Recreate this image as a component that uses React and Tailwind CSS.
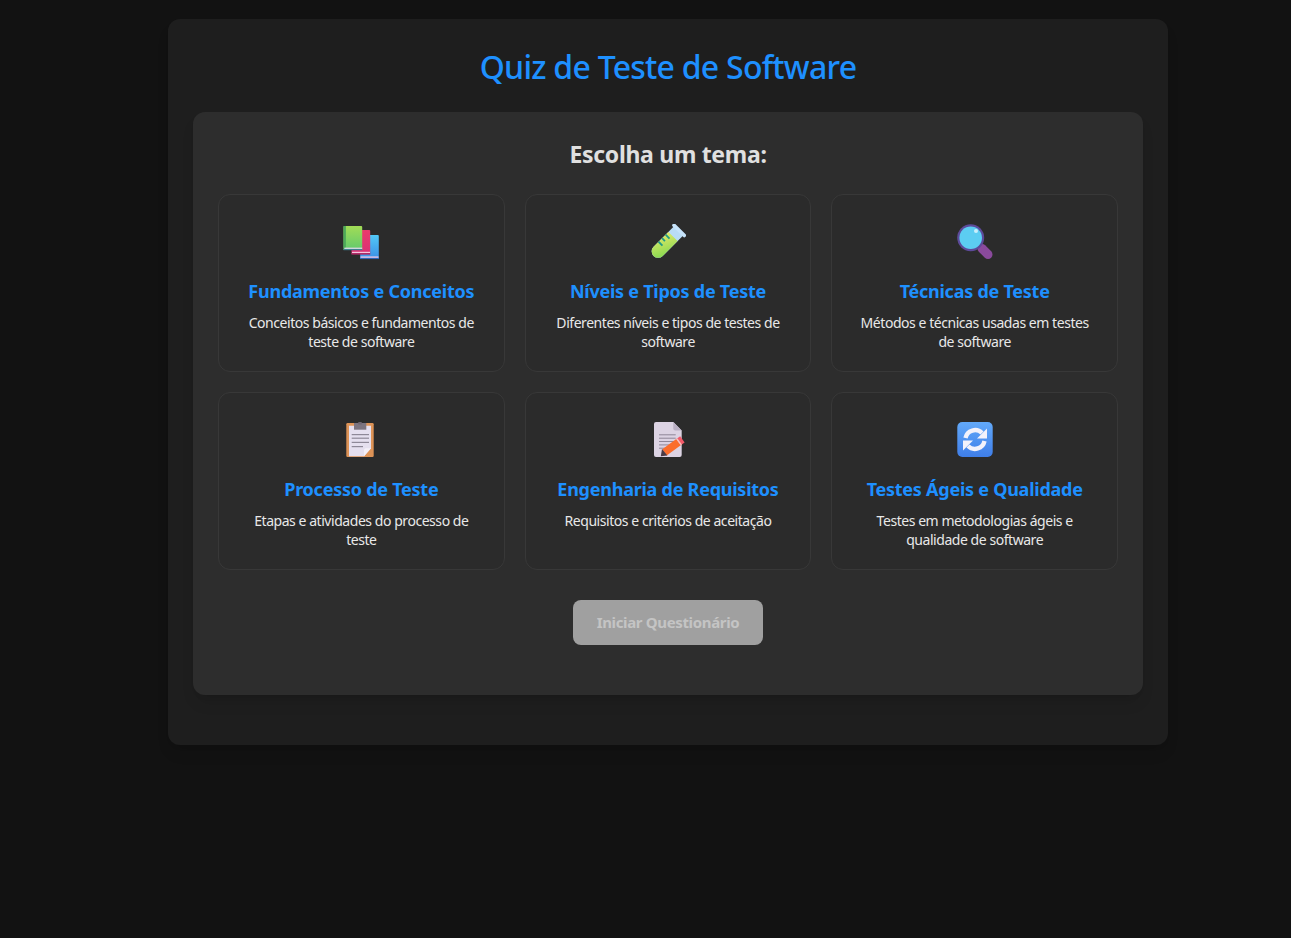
const font = "font-['Noto_Sans',sans-serif]";

const BooksIcon = () => (
  <svg viewBox="0 0 36 36" className="w-9 h-9">
    <defs>
      <linearGradient id="bookGreen" x1="0" y1="0" x2="0" y2="1">
        <stop offset="0" stopColor="#a2dc56" />
        <stop offset="1" stopColor="#62c96d" />
      </linearGradient>
      <linearGradient id="bookRed" x1="0" y1="0" x2="0" y2="1">
        <stop offset="0" stopColor="#ea3a6c" />
        <stop offset="1" stopColor="#d92f75" />
      </linearGradient>
      <linearGradient id="bookBlue" x1="0" y1="0" x2="0" y2="1">
        <stop offset="0" stopColor="#52c8f7" />
        <stop offset="1" stopColor="#3c8fe6" />
      </linearGradient>
    </defs>
    <path d="M17.2 11h17.6a1 1 0 0 1 1 1v23H17.2z" fill="url(#bookBlue)" />
    <rect x="17.5" y="32.4" width="18" height="1.5" fill="#e8c6e8" />
    <rect x="17.2" y="33.9" width="18.6" height="1.2" fill="#3067b8" />
    <path d="M8.5 6h17.7a1 1 0 0 1 1 1v23.3H8.5z" fill="url(#bookRed)" />
    <rect x="9" y="27.8" width="18" height="1.4" fill="#f3c4dd" />
    <rect x="8.5" y="29.2" width="18.7" height="1.3" fill="#a3245f" />
    <path d="M1.5 2h16.7a1 1 0 0 1 1 1v23H.5V3a1 1 0 0 1 1-1z" fill="url(#bookGreen)" />
    <rect x="0.5" y="2" width="2.4" height="22" fill="#4da85a" />
    <rect x="1.5" y="23.6" width="17.7" height="1.5" fill="#cfd5dd" />
    <rect x="0.5" y="25" width="18.7" height="1.2" fill="#3e7f8f" />
  </svg>
);

const TubeIcon = () => (
  <svg viewBox="0 0 36 36" className="w-9 h-9">
    <defs>
      <linearGradient id="tubeLiquid" x1="0" y1="0" x2="1" y2="1">
        <stop offset="0" stopColor="#dfe86a" />
        <stop offset="1" stopColor="#82d84e" />
      </linearGradient>
    </defs>
    <g transform="rotate(45 29 6.5)">
      <path d="M22.5 6h13v30a6.5 6.5 0 0 1-13 0z" fill="#b9dcf5" />
      <path d="M22.5 15h13v21a6.5 6.5 0 0 1-13 0z" fill="url(#tubeLiquid)" />
      <rect x="20" y="4.5" width="18" height="3.6" rx="1.6" fill="#c6e3fa" />
      <rect x="22.5" y="18" width="5.5" height="1.8" fill="#1f9a87" />
      <rect x="22.5" y="23" width="4" height="1.8" fill="#1f9a87" />
      <rect x="22.5" y="28" width="5.5" height="1.8" fill="#1f9a87" />
    </g>
  </svg>
);

const SearchIcon = () => (
  <svg viewBox="0 0 36 36" className="w-9 h-9">
    <line x1="25" y1="24.5" x2="31" y2="30.5" stroke="#8a4a9c" strokeWidth="9" strokeLinecap="round" />
    <circle cx="13.7" cy="13.7" r="13.5" fill="#5d4a9a" />
    <circle cx="13.7" cy="13.7" r="11.3" fill="#5ccdf2" />
    <circle cx="19" cy="7" r="2" fill="#c9eefb" />
  </svg>
);

const ClipboardIcon = () => (
  <svg viewBox="0 0 36 36" className="w-9 h-9">
    <rect x="3.3" y="1" width="27.4" height="34" rx="1.2" fill="#dd9357" />
    <path d="M6 3.7h22v22.5l-7 8.1H6z" fill="#e5dfef" />
    <path d="M21 34.3v-6a2 2 0 0 1 2-2h5z" fill="#f4eff8" />
    <rect x="11" y="1" width="12.3" height="6.7" fill="#7c7480" />
    <rect x="15.3" y="-0.5" width="3.4" height="3" fill="#6e6672" />
    <rect x="8.7" y="12" width="17.3" height="1.2" fill="#8e8898" />
    <rect x="8.7" y="15.6" width="17.3" height="1.2" fill="#8e8898" />
    <rect x="8.7" y="19.8" width="17.3" height="1.2" fill="#8e8898" />
    <rect x="8.7" y="24" width="11.3" height="1.2" fill="#8e8898" />
  </svg>
);

const MemoIcon = () => (
  <svg viewBox="0 0 36 36" className="w-9 h-9">
    <path d="M6 0h17.3l8.4 8.4V33a2 2 0 0 1-2 2H6a2 2 0 0 1-2-2V2a2 2 0 0 1 2-2z" fill="#dcd3e3" />
    <path d="M23.3 0l8.4 8.4h-6.4a2 2 0 0 1-2-2z" fill="#b9afc3" />
    <rect x="9" y="12.3" width="16.7" height="1" fill="#8f8698" />
    <rect x="9" y="15.7" width="16.7" height="1" fill="#8f8698" />
    <rect x="9" y="19" width="16.7" height="1" fill="#8f8698" />
    <rect x="9" y="22.4" width="11" height="1" fill="#8f8698" />
    <rect x="9" y="25.7" width="7" height="1" fill="#8f8698" />
    <line x1="14.5" y1="30.3" x2="28.5" y2="20.2" stroke="#fb6d2c" strokeWidth="7.6" />
    <line x1="28.5" y1="20.2" x2="32.4" y2="17.4" stroke="#f25a6a" strokeWidth="7.6" />
    <line x1="28.5" y1="20.2" x2="29.6" y2="19.4" stroke="#f9c6bd" strokeWidth="7.6" />
    <path d="M10.8 34.3l1.2-7.4 5.4 6.6z" fill="#4b3a44" />
  </svg>
);

const RefreshIcon = () => (
  <svg viewBox="0 0 36 36" className="w-9 h-9">
    <defs>
      <linearGradient id="refreshBg" x1="0" y1="0" x2="0" y2="1">
        <stop offset="0" stopColor="#62a9fa" />
        <stop offset="1" stopColor="#3f7ee8" />
      </linearGradient>
    </defs>
    <rect x="0.3" y="0" width="35.4" height="35" rx="5" fill="url(#refreshBg)" />
    <g fill="none" stroke="#f3f2fb" strokeWidth="4.4">
      <path d="M8.5 16a9.8 9.8 0 0 1 16.5-5" />
      <path d="M27.5 19a9.8 9.8 0 0 1-16.5 5" />
    </g>
    <path d="M30 6.5v10h-10z" fill="#f3f2fb" />
    <path d="M6 28.5v-10h10z" fill="#f3f2fb" />
  </svg>
);

const topics = [
  { title: 'Fundamentos e Conceitos', desc: 'Conceitos básicos e fundamentos de teste de software', icon: BooksIcon },
  { title: 'Níveis e Tipos de Teste', desc: 'Diferentes níveis e tipos de testes de software', icon: TubeIcon },
  { title: 'Técnicas de Teste', desc: 'Métodos e técnicas usadas em testes de software', icon: SearchIcon },
  { title: 'Processo de Teste', desc: 'Etapas e atividades do processo de teste', icon: ClipboardIcon },
  { title: 'Engenharia de Requisitos', desc: 'Requisitos e critérios de aceitação', icon: MemoIcon },
  { title: 'Testes Ágeis e Qualidade', desc: 'Testes em metodologias ágeis e qualidade de software', icon: RefreshIcon }
];

const App = () => {
  return (
    <div className={`min-h-[938px] bg-[#121212] pt-[19px] ${font}`}>
      <div className="ml-[168px] w-[1000px] rounded-xl bg-[#1e1e1e] px-[25px] pb-[50px] pt-[25px] shadow-lg">
        <h1 className="mb-[25px] h-[43px] text-center text-[32px] font-medium leading-[46px] tracking-[-0.75px] text-[#1e90ff]">
          Quiz de Teste de Software
        </h1>

        <div className="rounded-xl bg-[#2d2d2d] px-[25px] pb-[50px] pt-[27px] shadow-lg">
          <h2 className="mb-[25px] text-center text-[23px] font-bold leading-[30px] tracking-[-0.3px] text-[#e0e0e0]">
            Escolha um tema:
          </h2>

          <div className="grid grid-cols-3 gap-5">
            {topics.map((topic) => (
              <div key={topic.title} className="rounded-xl border border-[#383838] bg-[#2b2b2b] p-5 text-center">
                <div className="mb-2.5 flex h-[54px] items-center justify-center">
                  <topic.icon />
                </div>
                <h3 className="mb-2.5 text-lg font-bold leading-6 tracking-[-0.25px] text-[#1e90ff]">{topic.title}</h3>
                <p className="text-[14px] leading-[19px] tracking-[-0.45px] text-[#e8e8e8]">{topic.desc}</p>
              </div>
            ))}
          </div>

          <div className="mt-[30px] flex justify-center">
            <button
              disabled
              className="h-[45px] w-[190px] rounded-lg bg-[#a0a0a0] text-[15px] font-bold tracking-[-0.35px] text-[#c4c4c4]"
            >
              Iniciar Questionário
            </button>
          </div>
        </div>
      </div>
    </div>
  );
};

export default App;
